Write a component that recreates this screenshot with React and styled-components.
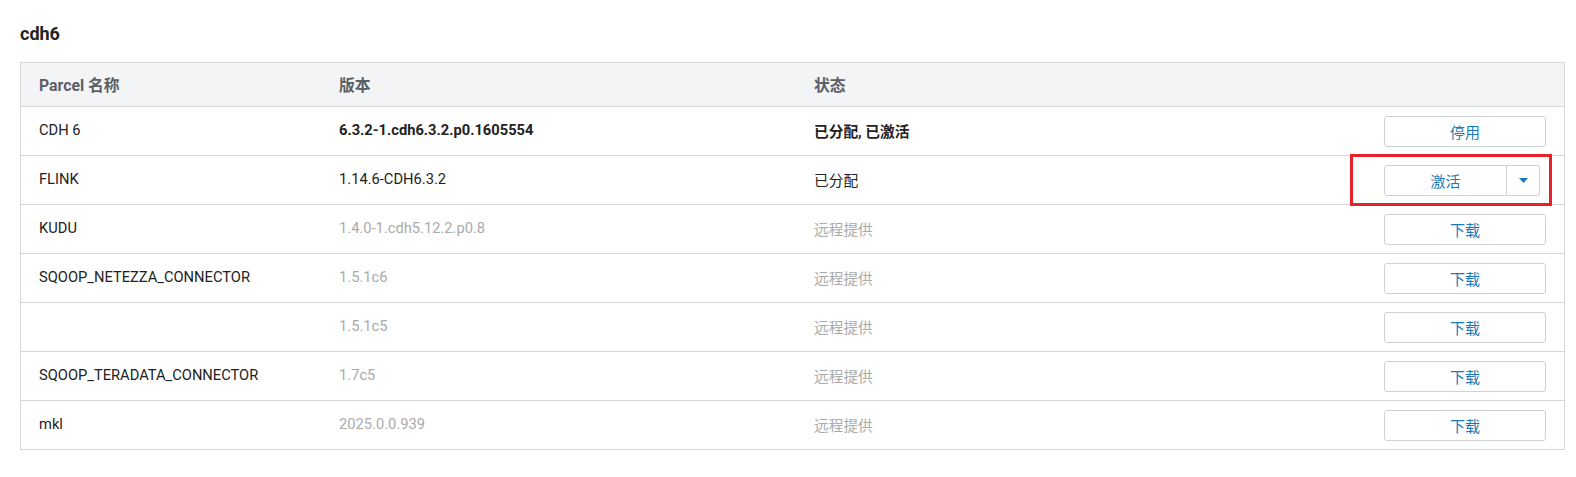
import React from 'react';
import styled, { createGlobalStyle } from 'styled-components';

const GlobalStyle = createGlobalStyle`
  body {
    margin: 0;
    background: #fff;
    font-family: Roboto, "Noto Sans CJK SC", sans-serif;
    color: #333;
  }
`;

const Page = styled.div`
  padding: 24px 11px 0 20px;
`;

const Title = styled.h2`
  margin: 0 0 18px 0;
  font-size: 18px;
  font-weight: 700;
  color: #222;
  line-height: 20px;
`;

const Table = styled.table`
  width: 100%;
  border-collapse: collapse;
  border: 1px solid #d6d6d6;
  font-size: 14.7px;
`;

const HeadCell = styled.th`
  background: #f3f4f6;
  color: #5b5f66;
  font-size: 15.8px;
  font-weight: 700;
  text-align: left;
  height: 43px;
  padding: 0 18px;
  border-bottom: 1px solid #d6d6d6;
  width: ${p => p.$w || 'auto'};
`;

const Cell = styled.td`
  height: 46px;
  padding: 0 18px 2px;
  border-bottom: 1px solid #d6d6d6;
  vertical-align: middle;
  color: ${p => (p.$muted ? '#aaaaaa' : '#222')};
  font-weight: ${p => (p.$bold ? 700 : 400)};
  text-align: ${p => (p.$right ? 'right' : 'left')};
`;

const ActionCell = styled(Cell)`
  height: 48px;
  padding: 0 18px;
`;

const ActionWrap = styled.div`
  position: relative;
  display: inline-flex;
  vertical-align: middle;
  margin-right: ${p => p.$offset || 0}px;
`;

const Button = styled.button`
  width: ${p => p.$w || '162px'};
  height: 31px;
  background: #fff;
  border: 1px solid #cfd2d4;
  border-radius: 3px;
  color: #1b7bb8;
  font-family: inherit;
  font-size: 15px;
  padding: 0;
  cursor: pointer;
`;

const SplitMain = styled(Button)`
  border-radius: 3px 0 0 3px;
`;

const SplitCaret = styled(Button)`
  border-left: none;
  border-radius: 0 3px 3px 0;
  display: flex;
  align-items: center;
  justify-content: center;
`;

const Highlight = styled.div`
  position: absolute;
  left: -34px;
  top: -11px;
  width: 202px;
  height: 52px;
  box-sizing: border-box;
  border: 3px solid #e8202a;
  pointer-events: none;
`;

const rows = [
  { name: 'CDH 6', version: '6.3.2-1.cdh6.3.2.p0.1605554', status: '已分配, 已激活', bold: true, action: '停用' },
  { name: 'FLINK', version: '1.14.6-CDH6.3.2', status: '已分配', action: '激活', split: true },
  { name: 'KUDU', version: '1.4.0-1.cdh5.12.2.p0.8', status: '远程提供', muted: true, action: '下载' },
  { name: 'SQOOP_NETEZZA_CONNECTOR', version: '1.5.1c6', status: '远程提供', muted: true, action: '下载' },
  { name: '', version: '1.5.1c5', status: '远程提供', muted: true, action: '下载' },
  { name: 'SQOOP_TERADATA_CONNECTOR', version: '1.7c5', status: '远程提供', muted: true, action: '下载' },
  { name: 'mkl', version: '2025.0.0.939', status: '远程提供', muted: true, action: '下载' },
];

export default function App() {
  return (
    <Page>
      <GlobalStyle />
      <Title>cdh6</Title>
      <Table>
        <thead>
          <tr>
            <HeadCell $w="264px">Parcel 名称</HeadCell>
            <HeadCell $w="439px">版本</HeadCell>
            <HeadCell>状态</HeadCell>
            <HeadCell $w="200px"></HeadCell>
          </tr>
        </thead>
        <tbody>
          {rows.map((r, i) => (
            <tr key={i}>
              <Cell>{r.name}</Cell>
              <Cell $bold={r.bold} $muted={r.muted}>{r.version}</Cell>
              <Cell $bold={r.bold} $muted={r.muted}>{r.status}</Cell>
              <ActionCell $right>
                {r.split ? (
                  <ActionWrap $offset={6}>
                    <SplitMain $w="123px">{r.action}</SplitMain>
                    <SplitCaret $w="33px">
                      <svg width="9" height="5" viewBox="0 0 9 5">
                        <path d="M0 0h9L4.5 5z" fill="#1b7bb8" />
                      </svg>
                    </SplitCaret>
                    <Highlight />
                  </ActionWrap>
                ) : (
                  <Button>{r.action}</Button>
                )}
              </ActionCell>
            </tr>
          ))}
        </tbody>
      </Table>
    </Page>
  );
}
